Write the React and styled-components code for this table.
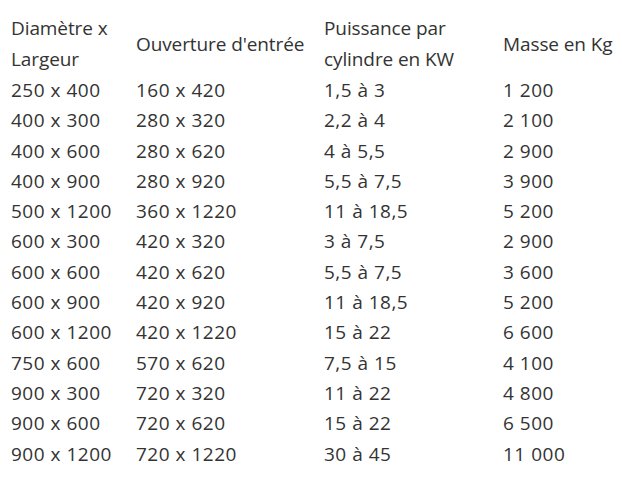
import React from 'react';
import styled, { createGlobalStyle } from 'styled-components';

const GlobalStyle = createGlobalStyle`
  html, body {
    margin: 0;
    padding: 0;
    background: #ffffff;
  }
  body {
    font-family: "Open Sans", "Noto Sans", sans-serif;
    color: #333333;
  }
`;

const Wrapper = styled.div`
  padding: 13px 0 0 11px;
`;

const Table = styled.table`
  border-collapse: collapse;
  table-layout: fixed;
  font-size: 19px;
`;

const Col = styled.col`
  width: ${(p) => p.$w}px;
`;

const HeadCell = styled.th`
  text-align: left;
  font-weight: 400;
  padding: 0;
  line-height: 31px;
  vertical-align: middle;
  height: 62px;
  white-space: nowrap;
  letter-spacing: -0.1px;
`;

const Cell = styled.td`
  padding: 0;
  line-height: 30.3px;
  height: 30.3px;
  white-space: nowrap;
  letter-spacing: 0.5px;
`;

const headers = [
  ['Diamètre x', 'Largeur'],
  ["Ouverture d'entrée"],
  ['Puissance par', 'cylindre en KW'],
  ['Masse en Kg'],
];

const rows = [
  ['250 x 400', '160 x 420', '1,5 à 3', '1 200'],
  ['400 x 300', '280 x 320', '2,2 à 4', '2 100'],
  ['400 x 600', '280 x 620', '4 à 5,5', '2 900'],
  ['400 x 900', '280 x 920', '5,5 à 7,5', '3 900'],
  ['500 x 1200', '360 x 1220', '11 à 18,5', '5 200'],
  ['600 x 300', '420 x 320', '3 à 7,5', '2 900'],
  ['600 x 600', '420 x 620', '5,5 à 7,5', '3 600'],
  ['600 x 900', '420 x 920', '11 à 18,5', '5 200'],
  ['600 x 1200', '420 x 1220', '15 à 22', '6 600'],
  ['750 x 600', '570 x 620', '7,5 à 15', '4 100'],
  ['900 x 300', '720 x 320', '11 à 22', '4 800'],
  ['900 x 600', '720 x 620', '15 à 22', '6 500'],
  ['900 x 1200', '720 x 1220', '30 à 45', '11 000'],
];

const widths = [125, 188, 179, 119];

export default function App() {
  return (
    <Wrapper>
      <GlobalStyle />
      <Table>
        <colgroup>
          {widths.map((w, i) => (
            <Col key={i} $w={w} />
          ))}
        </colgroup>
        <thead>
          <tr>
            {headers.map((lines, i) => (
              <HeadCell key={i}>
                {lines.map((l, j) => (
                  <React.Fragment key={j}>
                    {j > 0 && <br />}
                    {l}
                  </React.Fragment>
                ))}
              </HeadCell>
            ))}
          </tr>
        </thead>
        <tbody>
          {rows.map((r, i) => (
            <tr key={i}>
              {r.map((c, j) => (
                <Cell key={j}>{c}</Cell>
              ))}
            </tr>
          ))}
        </tbody>
      </Table>
    </Wrapper>
  );
}
